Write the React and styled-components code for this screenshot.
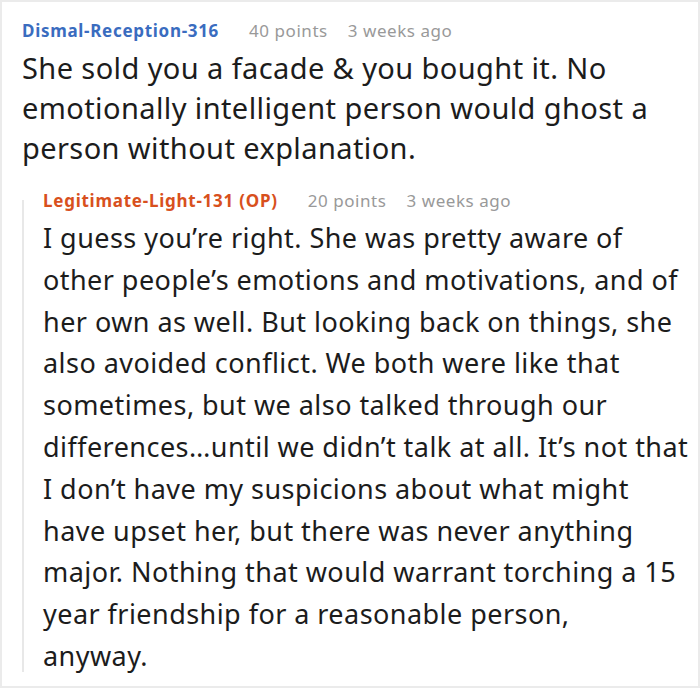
import React from "react";
import styled, { createGlobalStyle } from "styled-components";

const GlobalStyle = createGlobalStyle`
  html, body {
    margin: 0;
    padding: 0;
    background: #ffffff;
  }
  body {
    font-family: "Noto Sans", "Open Sans", sans-serif;
    color: #1a1a1a;
  }
`;

const comment = {
  author: "Dismal-Reception-316",
  points: "40 points",
  age: "3 weeks ago",
  body: "She sold you a facade & you bought it. No emotionally intelligent person would ghost a person without explanation.",
  reply: {
    author: "Legitimate-Light-131 (OP)",
    points: "20 points",
    age: "3 weeks ago",
    body: "I guess you\u2019re right. She was pretty aware of other people\u2019s emotions and motivations, and of her own as well. But looking back on things, she also avoided conflict. We both were like that sometimes, but we also talked through our differences\u2026until we didn\u2019t talk at all. It\u2019s not that I don\u2019t have my suspicions about what might have upset her, but there was never anything major. Nothing that would warrant torching a 15 year friendship for a reasonable person,\nanyway.",
  },
};

const App = () => {
  const { reply } = comment;
  return (
    <>
      <GlobalStyle />
      <Frame>
        <Comment>
          <Meta>
            <Author>{comment.author}</Author>
            <Stat>{comment.points}</Stat>
            <Stat>{comment.age}</Stat>
          </Meta>
          <Body>{comment.body}</Body>
          <Reply>
            <Meta>
              <Author $op>{reply.author}</Author>
              <Stat>{reply.points}</Stat>
              <Stat>{reply.age}</Stat>
            </Meta>
            <Body $reply>{reply.body}</Body>
          </Reply>
        </Comment>
      </Frame>
    </>
  );
};

const Frame = styled.div`
  width: 700px;
  height: 688px;
  box-sizing: border-box;
  border: 2px solid #ebebeb;
  background: #ffffff;
  overflow: hidden;
`;

const Comment = styled.div`
  padding: 15px 4px 0 20px;
`;

const Meta = styled.div`
  display: flex;
  align-items: baseline;
  gap: 20px;
  font-size: 17px;
  line-height: 28px;
  letter-spacing: 0.55px;
`;

const Author = styled.span`
  font-weight: 700;
  letter-spacing: ${(p) => (p.$op ? "0.75px" : "0.7px")};
  color: ${(p) => (p.$op ? "#d8501d" : "#3a6cbf")};
  margin-right: 10px;
`;

const Stat = styled.span`
  color: #999999;
`;

const Body = styled.p`
  margin: ${(p) => (p.$reply ? "2px 0 0" : "3px 0 0")};
  font-size: ${(p) => (p.$reply ? "27px" : "29px")};
  letter-spacing: ${(p) => (p.$reply ? "0.45px" : "0.4px")};
  line-height: ${(p) => (p.$reply ? "41.8px" : "40px")};
  white-space: pre-line;
  color: #1c1c1c;
`;

const Reply = styled.div`
  position: relative;
  margin-top: 19px;
  padding-left: 21px;

  &::before {
    content: "";
    position: absolute;
    left: 0;
    top: 13px;
    bottom: 5px;
    width: 2px;
    background: #e8e8e8;
  }
`;

export default App;
